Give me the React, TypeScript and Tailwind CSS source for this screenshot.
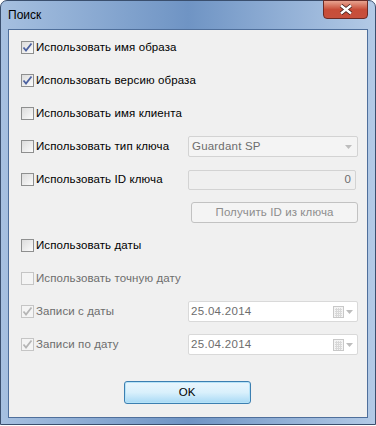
import React from 'react';

const font = { fontFamily: '"Liberation Sans", "DejaVu Sans", sans-serif' };

function Check({ checked, disabled }: { checked?: boolean; disabled?: boolean }) {
  return (
    <span
      className={
        'relative flex h-[13px] w-[13px] shrink-0 items-center justify-center border ' +
        (disabled
          ? 'border-[#c5c5c5] bg-[#f4f4f4]'
          : 'border-[#8e8f8f] bg-gradient-to-br from-[#dcdcdc] to-[#fbfbfb]')
      }
    >
      {checked && (
        <svg width="11" height="11" viewBox="0 0 11 11">
          <path
            d="M1.5 5.5 L4 8.5 L9.5 1.5"
            fill="none"
            stroke={disabled ? '#b5b5b5' : '#4c61a0'}
            strokeWidth="1.8"
          />
        </svg>
      )}
    </span>
  );
}

function Row({
  label,
  checked,
  disabled,
  children,
}: {
  label: string;
  checked?: boolean;
  disabled?: boolean;
  children?: React.ReactNode;
}) {
  return (
    <div className="flex h-[33px] items-center">
      <div className="flex w-[167px] items-center gap-[2px]">
        <Check checked={checked} disabled={disabled} />
        <span
          className={
            'whitespace-nowrap text-[11.5px] tracking-[0.1px] ' + (disabled ? 'text-[#6d6d6d]' : 'text-black')
          }
        >
          {label}
        </span>
      </div>
      {children}
    </div>
  );
}

function DateField() {
  return (
    <div className="flex h-[21px] w-[170px] items-center justify-between rounded-[2px] border border-[#d9d9d9] bg-white px-[2px] text-[11.5px] tracking-[0.3px] text-[#6d6d6d]">
      <span>25.04.2014</span>
      <span className="flex items-center gap-[2px] pr-[2px]">
        <svg width="11" height="12" viewBox="0 0 11 12">
          <rect x="0.5" y="0.5" width="10" height="11" fill="#f4f4f4" stroke="#c8c8c8" />
          <path d="M2 3.5h7M2 5.5h7M2 7.5h7M2 9.5h7M3.5 2v9M5.5 2v9M7.5 2v9" stroke="#d8d8d8" strokeWidth="1" />
        </svg>
        <svg width="7" height="4" viewBox="0 0 7 4">
          <path d="M0 0h7L3.5 4z" fill="#bdbdbd" />
        </svg>
      </span>
    </div>
  );
}

export default function App() {
  return (
    <div className="h-[426px] w-[376px] bg-white" style={font}>
      <div className="relative h-[425px] w-[376px] rounded-t-[7px] border border-[#3a4f6e] bg-gradient-to-r from-[#a6c0e0] via-[#6f94c4] to-[#b3cae6]">
        <div className="flex h-[28px] items-center pl-[7px] text-[12px] text-black">Поиск</div>
        <div className="absolute right-[7px] top-[-1px] flex h-[19px] w-[45px] items-center justify-center rounded-b-[4px] border border-[#6b2b26] bg-gradient-to-b from-[#e7a390] via-[#c84d39] to-[#c7503d]">
          <svg width="14" height="11" viewBox="0 0 14 11">
            <path d="M2 1.5L12 9.5M12 1.5L2 9.5" stroke="#3b1a17" strokeWidth="4" />
            <path d="M2 1.5L12 9.5M12 1.5L2 9.5" stroke="#ffffff" strokeWidth="2.4" />
          </svg>
        </div>
        <div className="ml-[7px] h-[389px] w-[360px] border border-[#4f6f9b] bg-[#f0f0f0]">
          <div className="flex flex-col pl-[12px] pt-[1px]">
            <Row label="Использовать имя образа" checked />
            <Row label="Использовать версию образа" checked />
            <Row label="Использовать имя клиента" />
            <Row label="Использовать тип ключа">
              <div className="flex h-[21px] w-[170px] items-center justify-between rounded-[2px] border border-[#d3d3d3] bg-[#f4f4f4] px-[3px] text-[11.5px] tracking-[0.2px] text-[#6d6d6d]">
                <span>Guardant SP</span>
                <svg width="7" height="4" viewBox="0 0 7 4" className="mr-[2px]">
                  <path d="M0 0h7L3.5 4z" fill="#bdbdbd" />
                </svg>
              </div>
            </Row>
            <Row label="Использовать ID ключа">
              <div className="flex h-[20px] w-[168px] items-center justify-end rounded-[2px] border border-[#d3d3d3] bg-[#f0f0f0] px-[4px] text-[11.5px] text-[#6d6d6d]">
                0
              </div>
            </Row>
            <div className="flex h-[33px] items-center pl-[170px]">
              <div className="flex h-[21px] w-[167px] items-center justify-center rounded-[3px] border border-[#c2c2c2] bg-[#f4f4f4] text-[11.5px] tracking-[0.1px] text-[#8d8d8d]">
                Получить ID из ключа
              </div>
            </div>
            <Row label="Использовать даты" />
            <Row label="Использовать точную дату" disabled />
            <Row label="Записи с даты" checked disabled>
              <DateField />
            </Row>
            <Row label="Записи по дату" checked disabled>
              <DateField />
            </Row>
          </div>
          <div className="mt-[20px] flex justify-center pr-[2px]">
            <div className="flex h-[23px] w-[127px] items-center justify-center rounded-[3px] border border-[#3c7fb1] bg-gradient-to-b from-[#eaf6fd] via-[#d9f0fc] to-[#a7d9f5] text-[11.5px] text-black shadow-[inset_0_0_0_1px_#b6e3f8]">
              OK
            </div>
          </div>
        </div>
      </div>
    </div>
  );
}
